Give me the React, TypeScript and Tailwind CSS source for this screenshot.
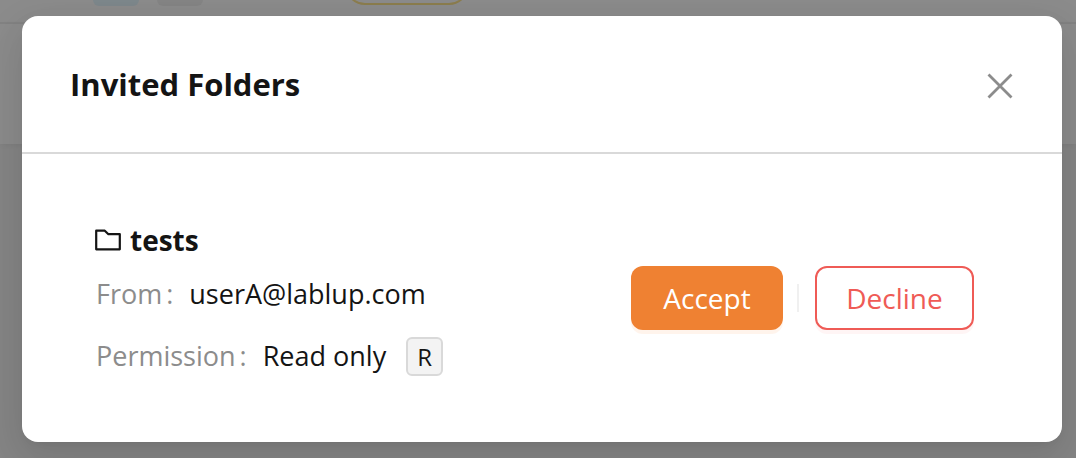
import React from 'react';

function PageBehind() {
  return (
    <div aria-hidden="true" className="flex min-h-screen flex-col bg-[#f5f5f5]">
      <div className="flex h-6 items-start border-b-2 border-[#f0f0f0] bg-white pl-[93px]">
        <span className="h-1.5 w-[46px] rounded-b-md bg-[#e6f7ff]" />
        <span className="ml-[18px] h-1.5 w-[46px] rounded-b-md bg-[#f3f3f3]" />
        <span className="ml-[142px] h-[5px] w-[124px] overflow-hidden">
          <span className="-mt-9 block h-[41px] rounded-[20px] border-2 border-[#ffe58f]" />
        </span>
      </div>
      <div className="h-[120px] bg-white shadow-[0_2px_6px_rgba(0,0,0,0.06)]" />
    </div>
  );
}

function CloseIcon() {
  return (
    <svg width="28" height="28" viewBox="0 0 28 28" fill="none" stroke="currentColor" strokeWidth="2.8" aria-hidden="true">
      <path d="M2.5 2.5l23 23M25.5 2.5l-23 23" />
    </svg>
  );
}

function FolderIcon() {
  return (
    <svg width="28" height="28" viewBox="0 0 28 28" fill="none" stroke="currentColor" strokeWidth="2.2" strokeLinejoin="round" aria-hidden="true">
      <path d="M2.2 4.7H10.8L14.4 8.2H25.8V23.3H2.2Z" />
    </svg>
  );
}

function Field({ label, children }: { label: string; children: React.ReactNode }) {
  return (
    <div className="flex items-center">
      <dt className="flex text-[#8c8c8c]">
        {label}
        <span className="mr-4 ml-1">:</span>
      </dt>
      <dd className="flex items-center">{children}</dd>
    </div>
  );
}

export default function App() {
  return (
    <div className="relative min-h-screen font-['Open_Sans',sans-serif] text-[#141414]">
      <PageBehind />
      <div className="absolute inset-0 flex items-start bg-black/45 pt-4 pr-3.5 pb-4 pl-[22px]">
        <section
          role="dialog"
          aria-modal="true"
          aria-labelledby="dialog-title"
          className="w-full rounded-2xl bg-white shadow-[0_12px_32px_rgba(0,0,0,0.08),0_6px_12px_-8px_rgba(0,0,0,0.12),0_18px_56px_16px_rgba(0,0,0,0.05)]"
        >
          <header className="flex items-center justify-between border-b-2 border-[#d9d9d9] px-12 py-12">
            <h2 id="dialog-title" className="text-[31px] leading-10 font-bold">
              Invited Folders
            </h2>
            <button type="button" aria-label="Close" className="mt-1 text-[#8c8c8c]">
              <CloseIcon />
            </button>
          </header>
          <div className="flex items-center justify-between pt-16 pr-[88px] pb-16 pl-[72px] text-[28px] leading-11">
            <div>
              <h3 className="flex items-center gap-2 font-bold">
                <FolderIcon />
                tests
              </h3>
              <dl className="flex flex-col gap-[18px] pt-2.5 pl-0.5 text-[27px]">
                <Field label="From">userA@lablup.com</Field>
                <Field label="Permission">
                  Read only
                  <span className="ml-5 rounded-md border-2 border-[#d9d9d9] bg-[#f3f3f3] px-[9px] text-[24px] leading-[35px]">
                    R
                  </span>
                </Field>
              </dl>
            </div>
            <div className="flex items-center">
              <button
                type="button"
                className="h-16 w-[152px] rounded-xl bg-[#ef8132] text-white shadow-[0_4px_0_rgba(255,145,71,0.1)]"
              >
                Accept
              </button>
              <span className="mr-4 ml-3.5 h-7 w-0.5 bg-[#f0f0f0]" />
              <button
                type="button"
                className="h-16 w-[159px] rounded-xl border-2 border-[#ef5b56] bg-white text-[#ef5b56] shadow-[0_4px_0_rgba(255,77,79,0.06)]"
              >
                Decline
              </button>
            </div>
          </div>
        </section>
      </div>
    </div>
  );
}
